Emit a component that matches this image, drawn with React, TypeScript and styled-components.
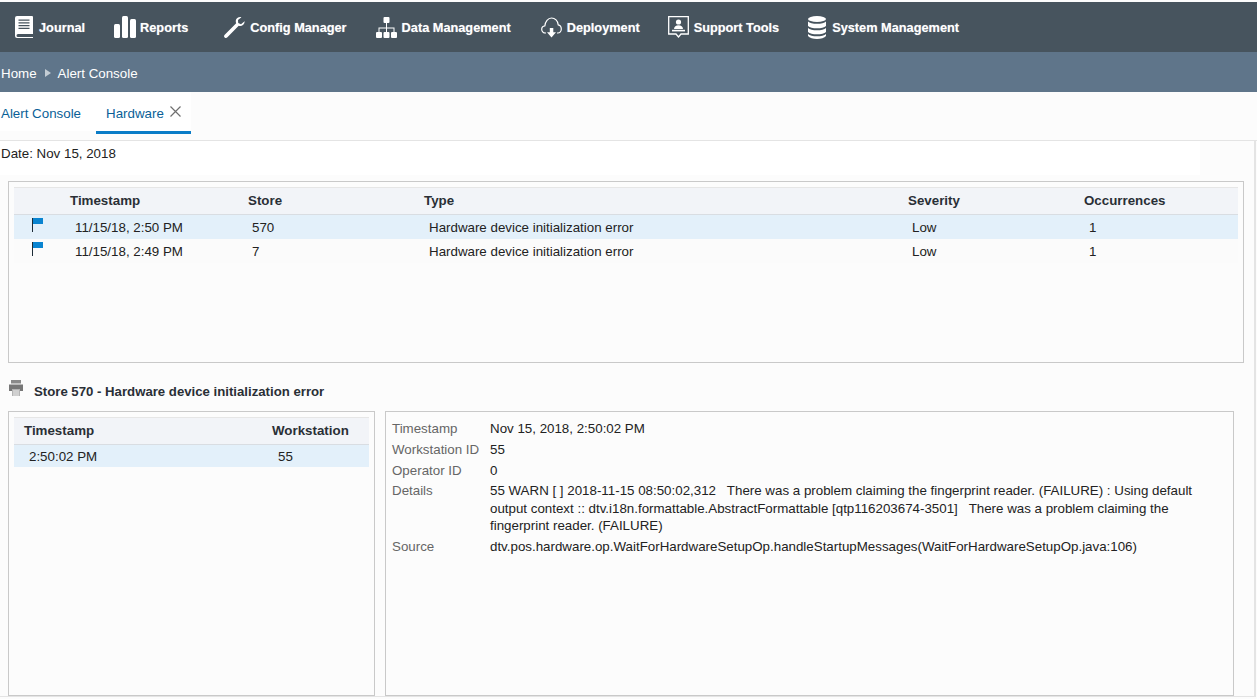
import React from "react";
import styled, { createGlobalStyle } from "styled-components";

const Global = createGlobalStyle`
  html, body {
    margin: 0;
    padding: 0;
    height: 699px;
    overflow: hidden;
    background: #fcfcfc;
    font-family: "Liberation Sans", Arial, sans-serif;
  }
`;

const Page = styled.div`
  width: 1257px;
  height: 699px;
  overflow: hidden;
  font-size: 13.33px;
  color: #222;
`;

const Nav = styled.nav`
  display: flex;
  align-items: center;
  height: 50px;
  margin-top: 2px;
  padding-left: 15px;
  background: #47545e;
`;

const NavItem = styled.a<{ $gap: number; $iconGap: number }>`
  display: flex;
  align-items: center;
  gap: ${(p) => p.$iconGap}px;
  margin-right: ${(p) => p.$gap}px;
  color: #fff;
  font-size: 12.75px;
  font-weight: 700;
  text-shadow: 0 0 1px rgba(255, 255, 255, 0.5);
  white-space: nowrap;
`;

const Crumbs = styled.div`
  display: flex;
  align-items: center;
  height: 40px;
  padding: 2px 0 0 1px;
  box-sizing: border-box;
  background: #5f758a;
  color: #fff;
`;

const CrumbArrow = styled.span`
  width: 0;
  height: 0;
  margin: 0 7px 0 8px;
  border-left: 6px solid #c3ccd4;
  border-top: 4px solid transparent;
  border-bottom: 4px solid transparent;
`;

const Tabs = styled.div`
  display: flex;
  align-items: flex-start;
  height: 49px;
  border-bottom: 1px solid #e4e4e4;
  box-sizing: border-box;
  background: #fcfcfc;
`;

const Tab = styled.div<{ $active?: boolean }>`
  display: flex;
  align-items: center;
  gap: 6px;
  box-sizing: border-box;
  height: ${(p) => (p.$active ? 42 : 39)}px;
  padding: 3px ${(p) => (p.$active ? "10px" : "15px")} 0 ${(p) => (p.$active ? "10px" : "1px")};
  color: #0a5f97;
  background: #fff;
  border-bottom: ${(p) => (p.$active ? "3px solid #0a7cc7" : "none")};
`;

const Close = styled.span`
  display: flex;
  margin-top: -3px;
  color: #6f6f6f;
`;

const Content = styled.main`
  height: 556px;
  box-sizing: border-box;
  border-right: 2px solid #e4e4e4;
  border-bottom: 1px solid #e4e4e4;
  margin-right: 1px;
  display: flex;
  flex-direction: column;
`;

const DateRow = styled.div`
  width: 1200px;
  height: 34px;
  flex-shrink: 0;
  padding: 5px 0 0 1px;
  box-sizing: border-box;
  background: #fff;
  color: #222;
  line-height: 15px;
`;

const AlertPanel = styled.section`
  box-sizing: border-box;
  flex-shrink: 0;
  width: 1236px;
  height: 182px;
  margin: 6px 0 0 8px;
  padding: 5px;
  border: 1px solid #c9c9c9;
  background: #fcfcfc;
`;

const AlertColumns = "56px 178px 176px 484px 176px 1fr";

const HeaderRow = styled.div<{ $cols: string; $height: number }>`
  display: grid;
  grid-template-columns: ${(p) => p.$cols};
  align-items: center;
  height: ${(p) => p.$height}px;
  padding-bottom: 2px;
  box-sizing: border-box;
  background: #f2f4f8;
  border-top: 1px solid #e6e6e6;
  border-bottom: 1px solid #d9dde2;
  font-weight: 700;
  color: #2a2f36;
`;

const Row = styled.div<{ $cols: string; $selected?: boolean; $height: number }>`
  display: grid;
  grid-template-columns: ${(p) => p.$cols};
  align-items: center;
  height: ${(p) => p.$height}px;
  background: ${(p) => (p.$selected ? "#e3f0fa" : "#fbfbfb")};
  color: #222;
`;

const Cell = styled.div<{ $shift?: number }>`
  padding-left: ${(p) => p.$shift ?? 5}px;
`;

const FlagCell = styled.div`
  display: flex;
  padding: 0 0 4px 18px;
`;

const TitleRow = styled.div`
  display: flex;
  align-items: center;
  flex-shrink: 0;
  gap: 11px;
  height: 24px;
  margin: 16px 0 0 9px;
  font-weight: 700;
  font-size: 13.2px;
  color: #2a2f36;
`;

const PrintWrap = styled.span`
  display: flex;
  margin-top: -7px;
`;

const Lower = styled.div`
  display: flex;
  gap: 10px;
  margin: 8px 0 0 8px;
  height: 285px;
`;

const HistoryPanel = styled.section`
  box-sizing: border-box;
  width: 367px;
  padding: 5px;
  border: 1px solid #c9c9c9;
  background: #fcfcfc;
`;

const DetailPanel = styled.section`
  box-sizing: border-box;
  width: 849px;
  padding: 8px 6px;
  border: 1px solid #c9c9c9;
  background: #fcfcfc;
  display: grid;
  grid-template-columns: 98px 722px;
  grid-auto-rows: min-content;
  row-gap: 3.4px;
  line-height: 17.4px;
`;

const Label = styled.div`
  color: #666;
`;

const Value = styled.div`
  color: #222;
  white-space: pre-wrap;
`;

const JournalIcon = () => (
  <svg width="18" height="22" viewBox="0 0 18 22">
    <path d="M2 0h15a1 1 0 0 1 1 1v17H3a1.500 1.500 0 0 0 0 3h15v1H2a2 2 0 0 1-2-2V2a2 2 0 0 1 2-2z" fill="#fff" />
    <path d="M3.500 4.200h11M3.500 6.900h11M3.500 9.600h11M3.500 12.300h11" stroke="#47545e" strokeWidth="1.200" />
  </svg>
);

const ReportsIcon = () => (
  <svg width="22" height="22" viewBox="0 0 22 22" fill="#fff">
    <rect x="0" y="8" width="6" height="14" rx="1.500" />
    <rect x="8" y="0" width="6" height="22" rx="1.500" />
    <rect x="16" y="3" width="6" height="19" rx="1.500" />
  </svg>
);

const WrenchIcon = () => (
  <svg width="21" height="21" viewBox="0 0 21 21" fill="#fff">
    <path d="M20.6 4.200 17 7.200l-2.800-1.200-.2-3 3.400-2.800C14.900-.4 12.200.9 11.800 3.600c-.1.900 0 1.800.4 2.600L.7 17.700c-.9.900-.9 2 0 2.700.8.800 1.900.700 2.700-.1L14.700 8.700c2.700 1 5.900-1 6-4.500z" />
  </svg>
);

const SitemapIcon = () => (
  <svg width="21" height="21" viewBox="0 0 21 21" fill="#fff">
    <rect x="7.500" y="0" width="6" height="6" rx="1" />
    <rect x="0" y="15" width="6" height="6" rx="1" />
    <rect x="7.500" y="15" width="6" height="6" rx="1" />
    <rect x="15" y="15" width="6" height="6" rx="1" />
    <path d="M10 6h1v4.500h7.500V15h-1v-3.500h-6.500V15h-1v-3.500H3.500V15h-1v-4.500H10z" />
  </svg>
);

const CloudIcon = () => (
  <svg width="21" height="21" viewBox="0 0 21 21">
    <path
      d="M5 16H4.500C2.500 16 .7 14.500 .7 12.300c0-1.800 1.300-3.300 3.200-3.500C4.200 4.500 7 1 10.500 1c3.500 0 6.400 2.700 6.700 6.800 1.900.3 3.100 2 3.100 4.200 0 2.100-1.500 4-3.500 4H16"
      fill="none"
      stroke="#fff"
      strokeWidth="1.200"
    />
    <path d="M8.800 11h3.500v4.200h2.700l-4.500 5.300-4.500-5.300h2.800z" fill="#fff" />
  </svg>
);

const SupportIcon = () => (
  <svg width="21" height="22" viewBox="0 0 21 22">
    <path d="M.7.7h19.600v17.300h-7.300l-2.500 3-2.500-3H.7z" fill="none" stroke="#fff" strokeWidth="1.300" />
    <circle cx="10.500" cy="6" r="2.600" fill="#fff" />
    <path d="M6 13c.2-2.500 2-3.700 4.500-3.700s4.300 1.200 4.500 3.700z" fill="#fff" />
    <rect x="4" y="13.800" width="13" height="1.600" fill="#fff" />
  </svg>
);

const DatabaseIcon = () => (
  <svg width="18" height="23" viewBox="0 0 18 23" fill="#fff">
    <ellipse cx="9" cy="3" rx="9" ry="3" />
    <path d="M0 5.500c1.500 1.700 5 2.300 9 2.300s7.500-.6 9-2.300V10c-1.500 1.700-5 2.300-9 2.300S1.500 11.700 0 10z" />
    <path d="M0 12c1.500 1.700 5 2.300 9 2.300s7.500-.6 9-2.300v4c-1.500 1.700-5 2.300-9 2.300S1.500 17.700 0 16z" />
    <path d="M0 18c1.500 1.700 5 2.300 9 2.300s7.500-.6 9-2.300v2c-1.500 2-5 3-9 3S1.500 22 0 20z" />
  </svg>
);

const Flag = () => (
  <svg width="11" height="14" viewBox="0 0 11 14">
    <rect x="0" y="0" width="1" height="14" fill="#1c2b36" />
    <rect x="1" y="0" width="10" height="6" fill="#0a84d0" />
  </svg>
);

const PrintIcon = () => (
  <svg width="14" height="16" viewBox="0 0 14 16">
    <rect x="2" y="0" width="10" height="3.500" fill="#8a8a8a" />
    <rect x="0" y="4.500" width="14" height="6.500" fill="#777" />
    <rect x="3" y="9" width="8" height="7" fill="#b4b4b4" />
    <path d="M5 10v6M7 10v6M9 10v6" stroke="#fcfcfc" strokeWidth="0.800" />
  </svg>
);

const CloseIcon = () => (
  <svg width="11" height="11" viewBox="0 0 11 11" stroke="currentColor" strokeWidth="1.200">
    <path d="M.500.500l10 10M10.500.500l-10 10" />
  </svg>
);

const navItems = [
  { label: "Journal", icon: <JournalIcon />, gap: 29, iconGap: 6 },
  { label: "Reports", icon: <ReportsIcon />, gap: 36, iconGap: 4 },
  { label: "Config Manager", icon: <WrenchIcon />, gap: 29, iconGap: 5 },
  { label: "Data Management", icon: <SitemapIcon />, gap: 30, iconGap: 5 },
  { label: "Deployment", icon: <CloudIcon />, gap: 28, iconGap: 5 },
  { label: "Support Tools", icon: <SupportIcon />, gap: 29, iconGap: 5 },
  { label: "System Management", icon: <DatabaseIcon />, gap: 29, iconGap: 6 },
];

const alerts = [
  { time: "11/15/18, 2:50 PM", store: "570", selected: true },
  { time: "11/15/18, 2:49 PM", store: "7", selected: false },
];

const details = [
  { label: "Timestamp", value: "Nov 15, 2018, 2:50:02 PM" },
  { label: "Workstation ID", value: "55" },
  { label: "Operator ID", value: "0" },
  {
    label: "Details",
    value:
      "55 WARN [ ] 2018-11-15 08:50:02,312   There was a problem claiming the fingerprint reader. (FAILURE) : Using default output context :: dtv.i18n.formattable.AbstractFormattable [qtp116203674-3501]   There was a problem claiming the fingerprint reader. (FAILURE)",
  },
  {
    label: "Source",
    value: "dtv.pos.hardware.op.WaitForHardwareSetupOp.handleStartupMessages(WaitForHardwareSetupOp.java:106)",
  },
];

const historyColumns = "10px 248px 1fr";

export default function App() {
  return (
    <Page>
      <Global />
      <Nav>
        {navItems.map((item) => (
          <NavItem key={item.label} $gap={item.gap} $iconGap={item.iconGap}>
            {item.icon}
            {item.label}
          </NavItem>
        ))}
      </Nav>
      <Crumbs>
        Home
        <CrumbArrow />
        Alert Console
      </Crumbs>
      <Tabs>
        <Tab>Alert Console</Tab>
        <Tab $active>
          Hardware
          <Close>
            <CloseIcon />
          </Close>
        </Tab>
      </Tabs>
      <Content>
        <DateRow>Date: Nov 15, 2018</DateRow>
        <AlertPanel>
          <HeaderRow $cols={AlertColumns} $height={28}>
            <span />
            <span>Timestamp</span>
            <span>Store</span>
            <span>Type</span>
            <span>Severity</span>
            <span>Occurrences</span>
          </HeaderRow>
          {alerts.map((a) => (
            <Row key={a.time} $cols={AlertColumns} $selected={a.selected} $height={24}>
              <FlagCell>
                <Flag />
              </FlagCell>
              <Cell>{a.time}</Cell>
              <Cell $shift={4}>{a.store}</Cell>
              <Cell>Hardware device initialization error</Cell>
              <Cell $shift={4}>Low</Cell>
              <Cell $shift={5}>1</Cell>
            </Row>
          ))}
        </AlertPanel>
        <TitleRow>
          <PrintWrap>
            <PrintIcon />
          </PrintWrap>
          Store 570 - Hardware device initialization error
        </TitleRow>
        <Lower>
          <HistoryPanel>
            <HeaderRow $cols={historyColumns} $height={28}>
              <span />
              <span>Timestamp</span>
              <span>Workstation</span>
            </HeaderRow>
            <Row $cols={historyColumns} $selected $height={22}>
              <span />
              <Cell>2:50:02 PM</Cell>
              <Cell $shift={6}>55</Cell>
            </Row>
          </HistoryPanel>
          <DetailPanel>
            {details.map((d) => (
              <React.Fragment key={d.label}>
                <Label>{d.label}</Label>
                <Value>{d.value}</Value>
              </React.Fragment>
            ))}
          </DetailPanel>
        </Lower>
      </Content>
    </Page>
  );
}
